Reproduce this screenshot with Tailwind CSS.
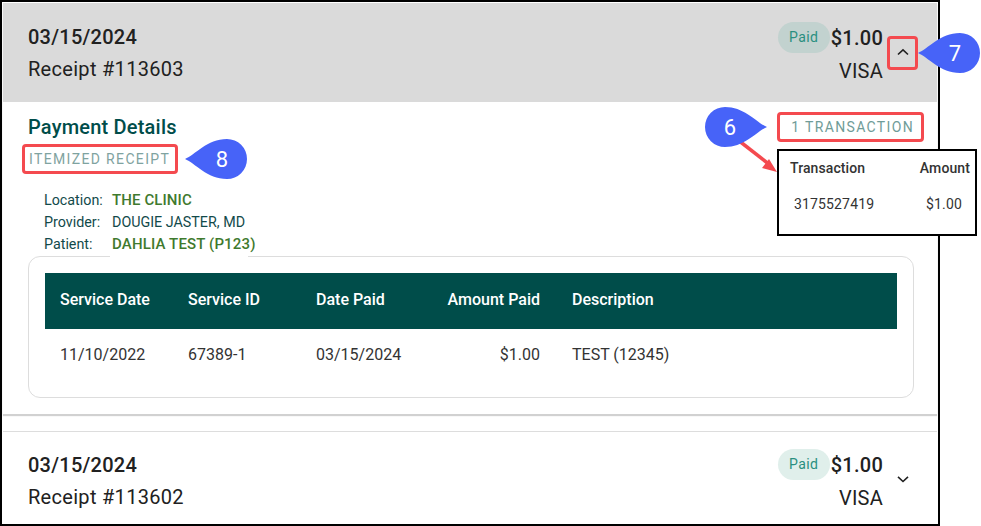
<!DOCTYPE html>
<html lang="en">
<head>
  <meta charset="UTF-8" />
  <title>Payment History</title>
  <script src="https://cdn.jsdelivr.net/npm/@tailwindcss/browser@4"></script>
</head>
<body class="bg-white font-[Roboto,sans-serif] overflow-hidden">
  <div class="relative w-[981px] h-[526px]">
    <!-- Frame -->
    <div class="w-[940px] h-[526px] border-2 border-black p-px overflow-hidden flex flex-col">
      <!-- Open receipt -->
      <div class="shadow-[0_2px_1px_rgba(0,0,0,0.18)] h-[411px] shrink-0">
        <div class="h-[99px] bg-[#dadada] pl-[25px] pr-[20px] flex justify-between">
          <div class="pt-[22px] text-[20px] leading-[24px] tracking-[0.25px] text-[#212121]">
            <div class="font-medium">03/15/2024</div>
            <div class="mt-[8px] tracking-[0.3px]">Receipt #113603</div>
          </div>
          <div class="flex">
            <div class="flex flex-col items-end pt-[19px]">
              <div class="flex items-center h-[31px]">
                <span class="w-[52px] h-[31px] rounded-full bg-[#c2d2cf] text-[#2a8f80] text-[14px] tracking-[0.4px] flex items-center justify-center">Paid</span>
                <span class="ml-px text-[20px] font-medium tracking-[0.25px] text-[#212121]">$1.00</span>
              </div>
              <div class="mt-[3px] text-[20px] leading-[30px] tracking-[0.25px] text-[#212121]">VISA</div>
            </div>
            <div class="w-[34px] pt-[42px] pl-[13px]">
              <svg width="14" height="14" viewBox="0 0 14 14" fill="none" stroke="#212121" stroke-width="1.6"><path d="M2 9.5 7 4.8l5 4.7" /></svg>
            </div>
          </div>
        </div>
        <div class="h-[312px] bg-white pl-[25px] pr-[23px] pt-[13px]">
          <div class="flex justify-between items-start">
            <div>
              <h2 class="text-[20px] leading-[24px] font-medium tracking-[0.2px] text-[#004d4a]">Payment Details</h2>
              <div class="mt-[11px] ml-px text-[14px] leading-[18px] tracking-[1.35px] text-[#7fa3a0]">ITEMIZED RECEIPT</div>
            </div>
            <div class="mt-[3px] text-[14px] leading-[18px] tracking-[1.35px] text-[#6f9c98]">1 TRANSACTION</div>
          </div>
          <div class="mt-[21px] ml-[16px] leading-[22px]">
            <div class="flex"><span class="w-[68px] text-[#124a4a] text-[14.3px]">Location:</span><span class="font-medium text-[15px] tracking-[0.1px] text-[#3f7a2e]">THE CLINIC</span></div>
            <div class="flex"><span class="w-[68px] text-[#124a4a] text-[14.3px]">Provider:</span><span class="text-[#124a4a] text-[14.3px]">DOUGIE JASTER, MD</span></div>
            <div class="flex"><span class="w-[68px] text-[#124a4a] text-[14.3px]">Patient:</span><span class="font-medium text-[15px] tracking-[0.15px] text-[#3f7a2e]">DAHLIA TEST (P123)</span></div>
          </div>
          <!-- Line items -->
          <div class="relative mt-[1px] w-[886px] h-[142px] border border-[#dddddd] rounded-[12px] pt-[16px] px-[16px]">
            <div class="absolute -top-px left-[81px] w-[138px] h-px bg-white"></div>
            <div class="h-[56px] pb-[2px] bg-[#004d4a] text-white text-[16px] font-medium grid grid-cols-[143px_128px_112px_112px_1fr] items-center">
              <span class="pl-[15px]">Service Date</span>
              <span>Service ID</span>
              <span>Date Paid</span>
              <span class="text-right">Amount Paid</span>
              <span class="pl-[32px]">Description</span>
            </div>
            <div class="h-[51px] text-[#333333] text-[16px] grid grid-cols-[143px_128px_112px_112px_1fr] items-center">
              <span class="pl-[15px]">11/10/2022</span>
              <span>67389-1</span>
              <span>03/15/2024</span>
              <span class="text-right">$1.00</span>
              <span class="pl-[32px]">TEST (12345)</span>
            </div>
          </div>
        </div>
      </div>
      <!-- Collapsed receipt -->
      <div class="mt-[17px] border-t border-[#dddddd] pl-[25px] pr-[20px] flex justify-between bg-white flex-1">
        <div class="pt-[21px] text-[20px] leading-[24px] tracking-[0.25px] text-[#212121]">
          <div class="font-medium">03/15/2024</div>
          <div class="mt-[8px] tracking-[0.3px]">Receipt #113602</div>
        </div>
        <div class="flex">
          <div class="flex flex-col items-end pt-[17px]">
            <div class="flex items-center h-[31px]">
              <span class="w-[52px] h-[31px] rounded-full bg-[#e0efeb] text-[#2a8f80] text-[14px] tracking-[0.4px] flex items-center justify-center">Paid</span>
              <span class="ml-px text-[20px] font-medium tracking-[0.25px] text-[#212121]">$1.00</span>
            </div>
            <div class="mt-[3px] text-[20px] leading-[30px] tracking-[0.25px] text-[#212121]">VISA</div>
          </div>
          <div class="w-[34px] pt-[40px] pl-[13px]">
            <svg width="14" height="14" viewBox="0 0 14 14" fill="none" stroke="#212121" stroke-width="1.6"><path d="M2 4.8 7 9.5l5-4.7" /></svg>
          </div>
        </div>
      </div>
    </div>

    <!-- Annotations -->
    <div class="absolute left-[887px] top-[36px] w-[31px] h-[34px] border-[3px] border-[#f44a4f] rounded-[4px]"></div>
    <div class="absolute left-[777px] top-[112px] w-[147px] h-[30px] border-[3px] border-[#f44a4f] rounded-[4px]"></div>
    <div class="absolute left-[22px] top-[144px] w-[156px] h-[30px] border-[3px] border-[#f44a4f] rounded-[4px]"></div>

    <!-- Transaction popup -->
    <div class="absolute left-[777px] top-[149px] w-[200px] h-[87px] bg-white border-2 border-black text-[14px] text-[#333333]">
      <div class="flex justify-between pl-[11px] pr-[5px] pt-[8px] leading-[18px] font-medium tracking-[0.1px]"><span>Transaction</span><span>Amount</span></div>
      <div class="flex justify-between pl-[15px] pr-[13px] pt-[18px] leading-[18px] tracking-[0.15px]"><span>3175527419</span><span>$1.00</span></div>
    </div>

    <!-- Arrow from callout 6 to popup -->
    <svg class="absolute left-[730px] top-[135px]" width="50" height="40" viewBox="0 0 50 40" fill="none">
      <path d="M8 5 40 30" stroke="#f44a4f" stroke-width="3.5" />
      <path d="M47 37 32 33 39 24Z" fill="#f44a4f" />
    </svg>

    <!-- Callouts -->
    <div class="absolute left-[185px] top-[139px] w-[62px] h-[40px]">
      <svg class="absolute inset-0" width="62" height="40" viewBox="0 0 62 40"><path d="M0 20C10 16 22 0 42 0a20 20 0 0 1 0 40C22 40 10 24 0 20Z" fill="#4763f8" /></svg>
      <span class="absolute left-[17px] w-[40px] top-0 h-[40px] flex items-center justify-center text-white text-[22px]">8</span>
    </div>
    <div class="absolute left-[918px] top-[33px] w-[62px] h-[40px]">
      <svg class="absolute inset-0" width="62" height="40" viewBox="0 0 62 40"><path d="M0 20C10 16 22 0 42 0a20 20 0 0 1 0 40C22 40 10 24 0 20Z" fill="#4763f8" /></svg>
      <span class="absolute left-[17px] w-[40px] top-0 h-[40px] flex items-center justify-center text-white text-[22px]">7</span>
    </div>
    <div class="absolute left-[705px] top-[107px] w-[62px] h-[40px]">
      <svg class="absolute inset-0" width="62" height="40" viewBox="0 0 62 40"><path d="M62 20C52 16 40 0 20 0a20 20 0 0 0 0 40C40 40 52 24 62 20Z" fill="#4763f8" /></svg>
      <span class="absolute left-[5px] w-[40px] top-0 h-[40px] flex items-center justify-center text-white text-[22px]">6</span>
    </div>
  </div>
</body>
</html>
